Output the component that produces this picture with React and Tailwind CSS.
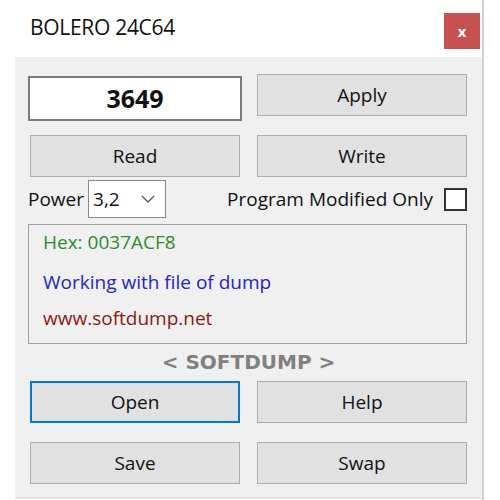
import React from 'react';

const font = { fontFamily: '"Open Sans", "Noto Sans", sans-serif' };

function Btn({ children, focused }) {
  return (
    <button
      className={
        focused
          ? 'h-[42px] w-[210px] bg-[#e1e1e1] border-2 border-[#0078d7] text-[19px] text-[#111] flex items-center justify-center'
          : 'h-[42px] w-[210px] bg-[#e1e1e1] border border-[#adadad] text-[19px] text-[#111] flex items-center justify-center'
      }
    >
      {children}
    </button>
  );
}

export default function App() {
  return (
    <div className="w-[500px] h-[500px] bg-white overflow-hidden" style={font}>
      <div className="w-[484px] h-[500px] border-r-2 border-[#d0d0d0] flex flex-col">
        {/* Title bar */}
        <div className="h-[57px] flex items-start justify-between pl-[30px] pr-[2px]">
          <div className="mt-[12px] text-[21px] text-[#111] tracking-[-0.3px]">BOLERO 24C64</div>
          <div className="mt-[13px] w-[36px] h-[36px] bg-[#c75050] flex items-center justify-center text-white font-bold text-[15px] leading-none">
            x
          </div>
        </div>

        {/* Body */}
        <div className="ml-[15px] h-[442px] bg-[#f0f0f0] border-b-2 border-[#e2e2e2] pl-[13px] pr-[15px] pt-[17px]">
          <div className="flex justify-between items-start">
            <div className="mt-[2px] w-[214px] h-[45px] bg-white border-2 border-[#7a7a7a] flex items-center justify-center font-bold text-[25px] text-[#111]">
              3649
            </div>
            <Btn>Apply</Btn>
          </div>

          <div className="flex justify-between mt-[14px] pl-[2px]">
            <Btn>Read</Btn>
            <Btn>Write</Btn>
          </div>

          <div className="flex items-center justify-between mt-[3px] h-[38px]">
            <div className="flex items-center gap-[4px]">
              <span className="text-[19px] text-[#111]">Power</span>
              <div className="w-[78px] h-[38px] bg-white border border-[#8a8a8a] flex items-center justify-between pl-[4px] pr-[10px]">
                <span className="text-[19px] text-[#111]">3,2</span>
                <svg width="14" height="8" viewBox="0 0 14 8" fill="none" stroke="#555" strokeWidth="1.3">
                  <path d="M1 1l6 6 6-6" />
                </svg>
              </div>
            </div>
            <div className="flex items-center gap-[11px]">
              <span className="text-[19px] text-[#111]">Program Modified Only</span>
              <div className="w-[23px] h-[23px] bg-white border-2 border-[#333]" />
            </div>
          </div>

          <div className="mt-[6px] h-[120px] border border-[#a0a0a0] pl-[14px] pt-[5px] flex flex-col text-[19px] leading-[24px]">
            <div className="text-[#2e8b2e]">Hex: 0037ACF8</div>
            <div className="text-[#2424c8] mt-[16px]">Working with file of dump</div>
            <div className="text-[#8b1818] mt-[12px]">www.softdump.net</div>
          </div>

          <div
            className="text-center font-bold text-[20px] text-[#808080] leading-[26px] mt-[5px] pl-[2px]"
            style={{ fontFamily: '"DejaVu Sans", sans-serif' }}
          >
            &lt; SOFTDUMP &gt;
          </div>

          <div className="flex justify-between mt-[6px] pl-[2px]">
            <Btn focused>Open</Btn>
            <Btn>Help</Btn>
          </div>

          <div className="flex justify-between mt-[19px] pl-[2px]">
            <Btn>Save</Btn>
            <Btn>Swap</Btn>
          </div>
        </div>
      </div>
    </div>
  );
}
